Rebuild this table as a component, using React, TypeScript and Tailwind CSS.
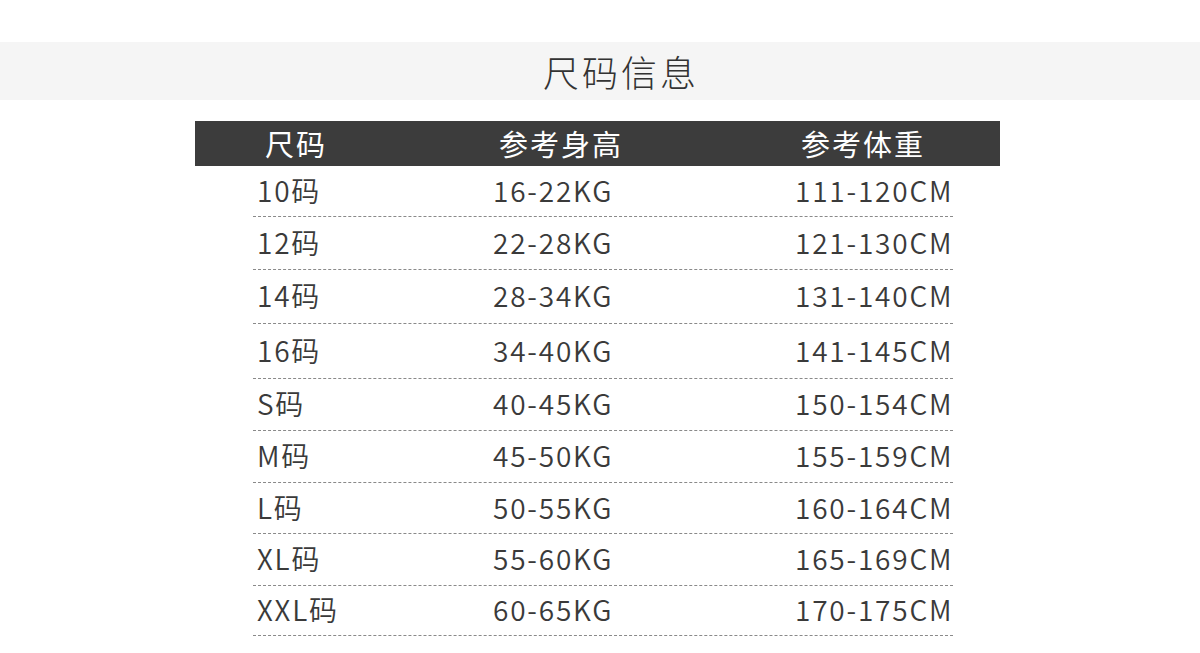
const rows = [
  { size: "10码", height: "16-22KG", weight: "111-120CM", h: "h-[51px]" },
  { size: "12码", height: "22-28KG", weight: "121-130CM", h: "h-[53px]" },
  { size: "14码", height: "28-34KG", weight: "131-140CM", h: "h-[54px]" },
  { size: "16码", height: "34-40KG", weight: "141-145CM", h: "h-[55px]" },
  { size: "S码", height: "40-45KG", weight: "150-154CM", h: "h-[52px]" },
  { size: "M码", height: "45-50KG", weight: "155-159CM", h: "h-[52px]" },
  { size: "L码", height: "50-55KG", weight: "160-164CM", h: "h-[51px]" },
  { size: "XL码", height: "55-60KG", weight: "165-169CM", h: "h-[52px]" },
  { size: "XXL码", height: "60-65KG", weight: "170-175CM", h: "h-[50px]" },
];

export default function App() {
  return (
    <div
      className="w-[1200px] h-[653px] bg-white text-[#3a3a3a] overflow-hidden"
      style={{ fontFamily: '"Noto Sans CJK SC", "Noto Sans", sans-serif' }}
    >
      {/* 标题 */}
      <div className="mt-[42px] h-[58px] bg-[#f5f5f5] flex items-center justify-center pl-[42px]">
        <h1 className="text-[36px] font-light leading-none tracking-[3px] text-[#333]">
          尺码信息
        </h1>
      </div>

      {/* 表格 */}
      <div className="ml-[195px] mt-[21px] w-[805px]">
        <div className="h-[45px] bg-[#3c3c3c] text-white text-[29px] tracking-[2px] flex items-center pl-[70px] whitespace-nowrap">
          <div className="w-[234px] shrink-0">尺码</div>
          <div className="w-[302px] shrink-0">参考身高</div>
          <div className="flex-1">参考体重</div>
        </div>

        <div className="ml-[58px] w-[700px]">
          {rows.map((row) => (
            <div
              key={row.size}
              className={`${row.h} flex items-center pb-[3px] border-b border-dashed border-[#8a8a8a] text-[28px] font-[350] tracking-[1.8px] whitespace-nowrap`}
            >
              <div className="w-[240px] shrink-0 pl-[4px]">{row.size}</div>
              <div className="w-[302px] shrink-0">{row.height}</div>
              <div className="flex-1">{row.weight}</div>
            </div>
          ))}
        </div>
      </div>
    </div>
  );
}
